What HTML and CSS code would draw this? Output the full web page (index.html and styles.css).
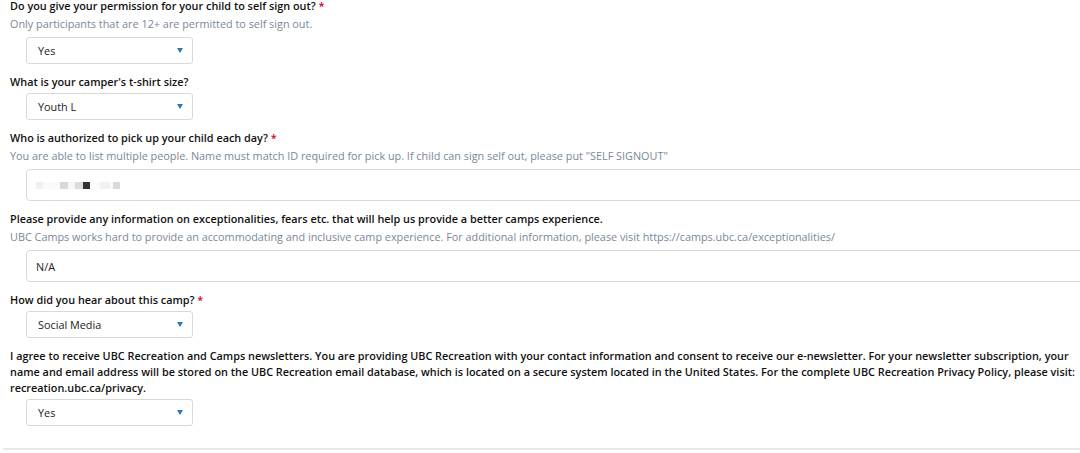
FILE: index.html
```html
<!DOCTYPE html>
<html lang="en">
<head>
<meta charset="utf-8">
<title>Camp Registration Questions</title>
<link rel="stylesheet" href="styles.css">
</head>
<body>
<form class="form">
  <div class="field">
    <div class="label">Do you give your permission for your child to self sign out? <span class="req">*</span></div>
    <div class="help">Only participants that are 12+ are permitted to self sign out.</div>
    <div class="select"><span>Yes</span><span class="caret"></span></div>
  </div>
  <div class="field">
    <div class="label">What is your camper's t-shirt size?</div>
    <div class="select"><span>Youth L</span><span class="caret"></span></div>
  </div>
  <div class="field">
    <div class="label">Who is authorized to pick up your child each day? <span class="req">*</span></div>
    <div class="help">You are able to list multiple people. Name must match ID required for pick up. If child can sign self out, please put "SELF SIGNOUT"</div>
    <div class="input">
      <span class="blur">
        <i class="px c1"></i><i class="px c2"></i><i class="px c3"></i><i class="px c4"></i><i class="px c5"></i><i class="px c6"></i><i class="px c7"></i><i class="px c8"></i><i class="px c9"></i><i class="px c10"></i>
      </span>
    </div>
  </div>
  <div class="field">
    <div class="label">Please provide any information on exceptionalities, fears etc. that will help us provide a better camps experience.</div>
    <div class="help">UBC Camps works hard to provide an accommodating and inclusive camp experience. For additional information, please visit https://camps.ubc.ca/exceptionalities/</div>
    <div class="input"><span>N/A</span></div>
  </div>
  <div class="field">
    <div class="label">How did you hear about this camp? <span class="req">*</span></div>
    <div class="select"><span>Social Media</span><span class="caret"></span></div>
  </div>
  <div class="field">
    <div class="label">I agree to receive UBC Recreation and Camps newsletters. You are providing UBC Recreation with your contact information and consent to receive our e-newsletter. For your newsletter subscription, your name and email address will be stored on the UBC Recreation email database, which is located on a secure system located in the United States. For the complete UBC Recreation Privacy Policy, please visit: recreation.ubc.ca/privacy.</div>
    <div class="select"><span>Yes</span><span class="caret"></span></div>
  </div>
  <div class="rule"></div>
</form>
</body>
</html>
```
FILE: styles.css
```css
html, body {
  margin: 0;
  padding: 0;
  background: #ffffff;
  overflow: hidden;
}
body {
  font-family: "Open Sans", "Liberation Sans", sans-serif;
  color: #1a1a1a;
}
.form {
  margin-top: -2px;
  width: 1100px;
}
.field {
  padding-left: 10px;
  margin-bottom: 10px;
}
.label {
  font-size: 10.85px;
  font-weight: 600;
  line-height: 16px;
  color: #111;
  width: 1065px;
}
.req {
  color: #d0021b;
}
.help {
  font-size: 10.85px;
  line-height: 16px;
  margin-top: 2px;
  color: #7a8898;
}
.select {
  margin-left: 16px;
  margin-top: 3px;
  width: 167px;
  height: 27px;
  box-sizing: border-box;
  border: 1px solid #d9d9d9;
  border-radius: 3px;
  display: flex;
  align-items: center;
  justify-content: space-between;
  padding: 0 9px 0 11px;
  font-size: 10.85px;
  color: #222;
}
.help + .select,
.help + .input {
  margin-top: 5px;
}
.caret {
  width: 0;
  height: 0;
  border-left: 3.5px solid transparent;
  border-right: 3.5px solid transparent;
  border-top: 5px solid #2b78b5;
}
.input {
  margin-left: 16px;
  margin-top: 3px;
  height: 32px;
  box-sizing: border-box;
  border: 1px solid #d9d9d9;
  border-radius: 4px;
  display: flex;
  align-items: center;
  padding-left: 9px;
  font-size: 10.85px;
  color: #222;
}
.blur {
  display: flex;
  align-items: center;
  height: 8px;
}
.px {
  display: block;
  height: 7px;
  width: 7px;
}
.c1 { background: #f0f0f0; width: 7px; }
.c2 { background: #fafafa; width: 17px; }
.c3 { background: #d8d8d8; width: 8px; }
.c4 { background: #f6f6f6; width: 7px; }
.c5 { background: #dcdcdc; width: 8px; }
.c6 { background: #333333; width: 7px; }
.c7 { background: #fbfbfb; width: 10px; }
.c8 { background: #f1f1f1; width: 10px; }
.c9 { background: #fbfbfb; width: 3px; }
.c10 { background: #dadada; width: 7px; }
.rule {
  margin-left: 3px;
  margin-top: 22px;
  height: 2px;
  background: #e8e8e8;
}
```
